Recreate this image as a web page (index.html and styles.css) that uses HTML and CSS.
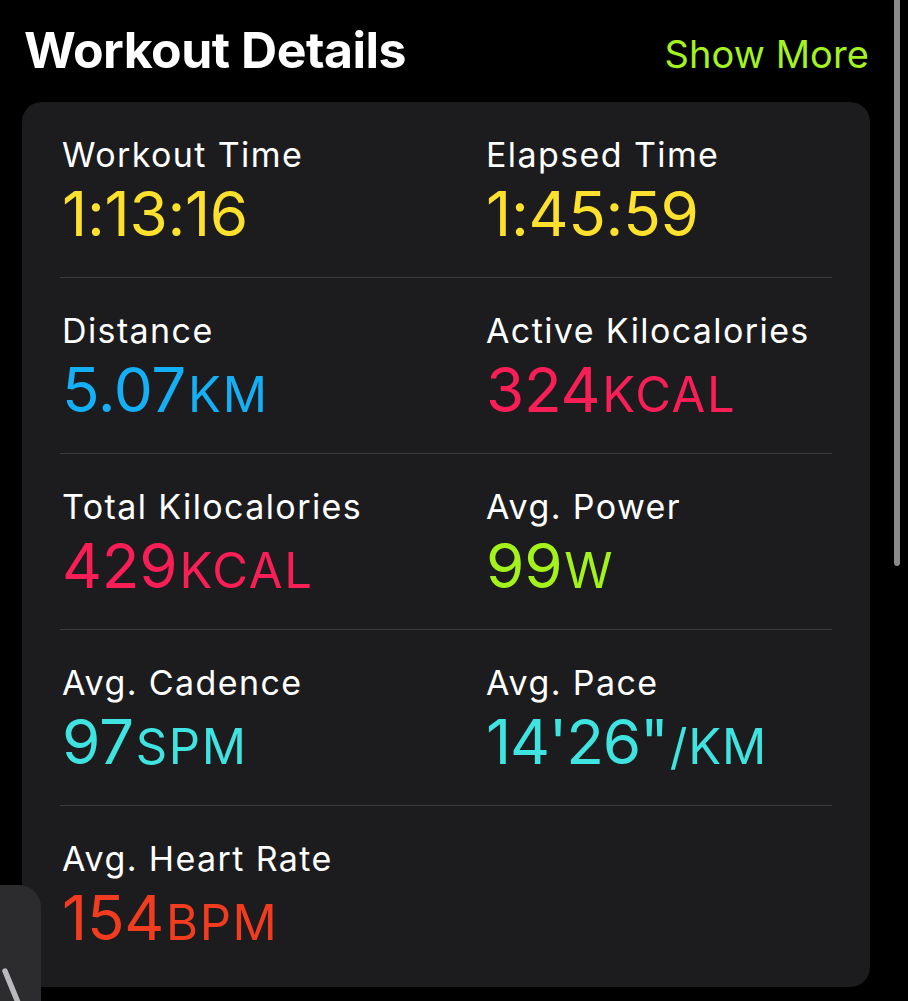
FILE: index.html
```html
<!DOCTYPE html>
<html lang="en">
<head>
<meta charset="utf-8">
<title>Workout Details</title>
<link rel="stylesheet" href="styles.css">
</head>
<body>
<div class="page">
  <header class="header">
    <h1 class="title">Workout Details</h1>
    <a class="more">Show More</a>
  </header>
  <section class="card">
    <div class="row">
      <div class="cell"><div class="label">Workout Time</div><div class="value yellow">1:13:16</div></div>
      <div class="cell"><div class="label">Elapsed Time</div><div class="value yellow">1:45:59</div></div>
    </div>
    <div class="divider"></div>
    <div class="row">
      <div class="cell"><div class="label">Distance</div><div class="value blue">5.07<span class="unit">KM</span></div></div>
      <div class="cell"><div class="label">Active Kilocalories</div><div class="value pink">324<span class="unit">KCAL</span></div></div>
    </div>
    <div class="divider"></div>
    <div class="row">
      <div class="cell"><div class="label">Total Kilocalories</div><div class="value pink">429<span class="unit">KCAL</span></div></div>
      <div class="cell"><div class="label">Avg. Power</div><div class="value green">99<span class="unit">W</span></div></div>
    </div>
    <div class="divider"></div>
    <div class="row">
      <div class="cell"><div class="label">Avg. Cadence</div><div class="value cyan">97<span class="unit">SPM</span></div></div>
      <div class="cell"><div class="label">Avg. Pace</div><div class="value cyan pace">14'26"<span class="unit">/KM</span></div></div>
    </div>
    <div class="divider"></div>
    <div class="row last">
      <div class="cell"><div class="label">Avg. Heart Rate</div><div class="value red">154<span class="unit">BPM</span></div></div>
      <div class="cell"></div>
    </div>
  </section>
  <div class="scrollbar"></div>
  <div class="floating">
    <svg class="floating-mark" width="41" height="40" viewBox="0 0 41 40">
      <line x1="5" y1="4" x2="19" y2="38" stroke="#b9b9be" stroke-width="5.5" stroke-linecap="round"/>
    </svg>
  </div>
</div>
</body>
</html>
```
FILE: styles.css
```css
html, body {
  margin: 0;
  padding: 0;
  background: #000;
}
body {
  width: 908px;
  height: 1001px;
  overflow: hidden;
  font-family: "Inter", "Liberation Sans", sans-serif;
  color: #fff;
}
.page {
  position: relative;
  width: 908px;
  height: 1001px;
}
.header {
  display: flex;
  justify-content: space-between;
  align-items: baseline;
  padding: 20px 39px 0 24px;
  height: 60px;
}
.title {
  margin: 0;
  font-size: 50px;
  line-height: 60px;
  font-weight: 700;
  letter-spacing: -0.5px;
}
.more {
  font-size: 38px;
  line-height: 60px;
  color: #a4f320;
  letter-spacing: 0.1px;
}
.card {
  margin: 22px 0 0 22px;
  width: 848px;
  background: #1c1c1e;
  border-radius: 20px;
  display: flex;
  flex-direction: column;
}
.row {
  display: grid;
  grid-template-columns: 424px 424px;
  height: 175px;
}
.row.last {
  height: 181px;
}
.cell {
  padding: 33px 0 0 40px;
  display: flex;
  flex-direction: column;
}
.label {
  font-size: 34px;
  line-height: 40px;
  letter-spacing: 1.4px;
  white-space: nowrap;
}
.value {
  margin-top: 4px;
  font-size: 62px;
  line-height: 70px;
  letter-spacing: -0.3px;
  white-space: nowrap;
}
.value.pace {
  letter-spacing: -1.2px;
}
.unit {
  font-size: 49px;
  letter-spacing: 1.6px;
  margin-left: 2px;
}
.pace .unit {
  letter-spacing: 0.8px;
}
.divider {
  height: 1px;
  margin: 0 38px;
  background: #3a3a3c;
}
.yellow { color: #fde12d; }
.blue { color: #14aff5; }
.pink { color: #fa1e56; }
.green { color: #a4f21c; }
.cyan { color: #3fe3e0; }
.red { color: #f13c1f; }
.scrollbar {
  position: absolute;
  top: -10px;
  left: 894px;
  width: 6px;
  height: 576px;
  border-radius: 3px;
  background: #8a8a8a;
}
.floating {
  position: absolute;
  left: -30px;
  top: 885px;
  width: 71px;
  height: 160px;
  border-radius: 22px;
  background: #2c2c2e;
}
.floating-mark {
  position: absolute;
  left: 30px;
  top: 82px;
}
```
